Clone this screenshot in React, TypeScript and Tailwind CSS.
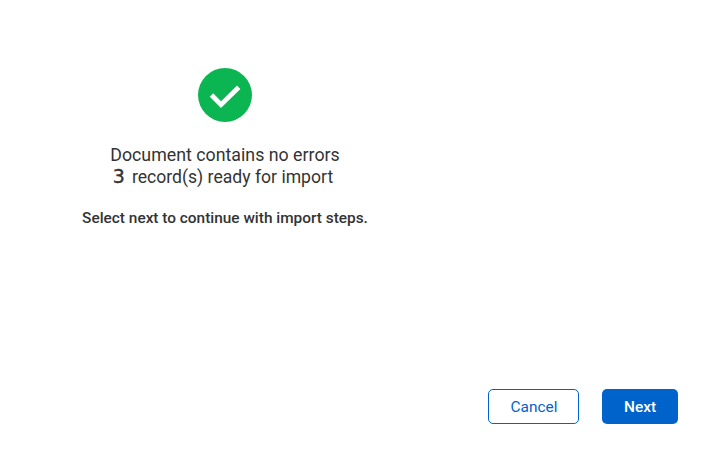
function CheckBadge() {
  return (
    <div className="flex h-[54px] w-[54px] items-center justify-center rounded-full bg-[#0bb551]">
      <svg width="34" height="26" viewBox="0 0 34 26" fill="none">
        <path d="M3.5 13L13 22.6L30.7 5.3" stroke="white" strokeWidth="4.8" />
      </svg>
    </div>
  );
}

export default function App() {
  return (
    <div className="flex h-[463px] w-[723px] flex-col bg-white font-['Roboto',sans-serif] text-[#333333]">
      <div className="flex w-[450px] flex-col items-center pt-[68px]">
        <CheckBadge />
        <p className="mt-[22px] text-center text-[17.8px] leading-[21px]">Document contains no errors</p>
        <p className="mt-px flex items-baseline justify-center pr-[4px] text-[17.6px] leading-[21px]">
          <span className="mr-[7px] font-['DejaVu_Sans',sans-serif] text-[19px] font-normal [-webkit-text-stroke:0.4px_#333333]">3</span>
          record(s) ready for import
        </p>
        <p className="mt-[20px] text-center text-[15.4px] leading-[21px] font-medium">
          Select next to continue with import steps.
        </p>
      </div>
      <div className="mt-auto mr-[45px] mb-[39px] flex justify-end gap-[23px]">
        <button className="h-[35px] w-[91px] rounded-[5px] border border-[#0063cc] bg-white pt-[2px] pl-[1px] text-[15.4px] text-[#0063cc]">
          Cancel
        </button>
        <button className="h-[35px] w-[76px] rounded-[5px] bg-[#0063cc] pt-[2px] text-[15.4px] font-medium text-white">
          Next
        </button>
      </div>
    </div>
  );
}
